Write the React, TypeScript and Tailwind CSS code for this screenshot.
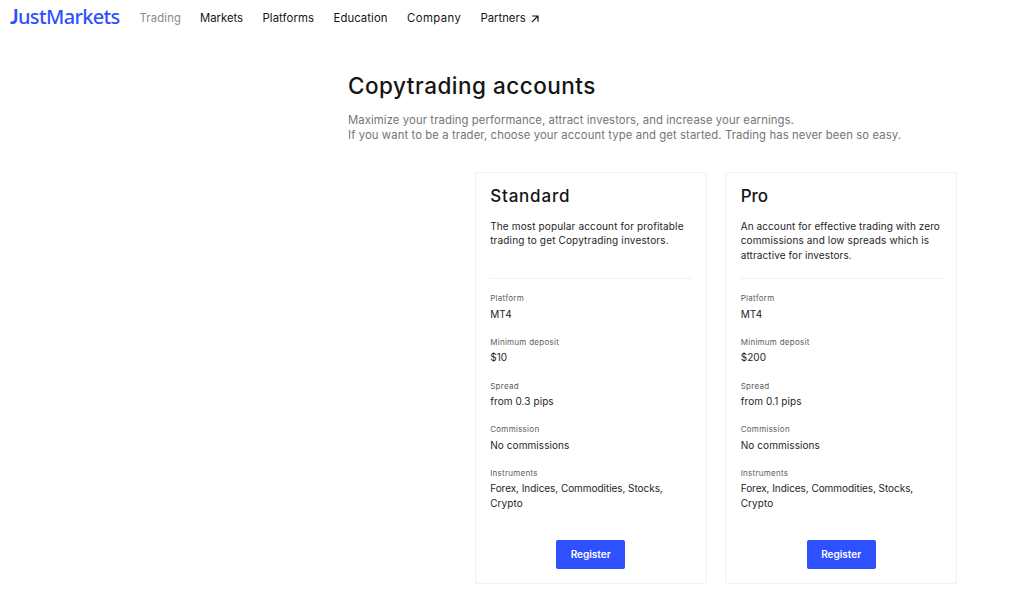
const navItems = [
  { label: 'Markets', className: 'w-[62.5px]' },
  { label: 'Platforms', className: 'w-[71px] tracking-[0.1px]' },
  { label: 'Education', className: 'w-[73.5px] tracking-[0.1px]' },
  { label: 'Company', className: 'w-[73.5px] tracking-[0.45px]' },
]

const accounts = [
  {
    name: 'Standard',
    titleClass: 'tracking-[0.8px]',
    description: [
      { text: 'The most popular account for profitable', className: 'tracking-[0.14px]' },
      { text: 'trading to get Copytrading investors.', className: 'tracking-[0.15px]' },
    ],
    deposit: '$10',
    spread: 'from 0.3 pips',
  },
  {
    name: 'Pro',
    titleClass: 'tracking-normal',
    description: [
      { text: 'An account for effective trading with zero', className: 'tracking-[0.08px]' },
      { text: 'commissions and low spreads which is', className: 'tracking-[0.13px]' },
      { text: 'attractive for investors.', className: 'tracking-[0.1px]' },
    ],
    deposit: '$200',
    spread: 'from 0.1 pips',
  },
]

function Header() {
  return (
    <header className="flex h-9 items-center whitespace-nowrap pl-[10px] pt-px text-[11.3px] text-[#151515]">
      <a className="mt-[-4px] w-[129.5px] font-['Noto_Sans'] text-[20px] font-medium leading-none tracking-[-0.65px] text-[#2f50ff]">
        <span className="font-['Lato'] font-bold">J</span>ustMarkets
      </a>
      <a className="w-[60.5px] tracking-[0.15px] text-[#8a8a8a]">Trading</a>
      {navItems.map((item) => (
        <a key={item.label} className={item.className}>
          {item.label}
        </a>
      ))}
      <a className="flex items-center">
        <span className="w-[50px]">Partners</span>
        <svg className="mt-px h-2 w-2" viewBox="0 0 8 8" fill="none" stroke="currentColor" strokeWidth="1.2">
          <path d="M1.2 1H7V6.8M7 1L.8 7.2" />
        </svg>
      </a>
    </header>
  )
}

function Detail({ label, lines }: { label: string; lines: string[] }) {
  return (
    <div className="mb-[12.6px] whitespace-nowrap">
      <dt className="h-[16.5px] text-[8px] leading-4 tracking-[0.27px] text-[#5c5c5c]">{label}</dt>
      {lines.map((line) => (
        <dd
          key={line}
          className={
            line.length > 20
              ? 'h-[15px] text-[10px] leading-[15px] tracking-[-0.05px] text-[#1e1e1e]'
              : 'h-[14.5px] text-[10px] leading-[15px] tracking-[0.08px] text-[#1e1e1e]'
          }
        >
          {line}
        </dd>
      ))}
    </div>
  )
}

function AccountCard({ account }: { account: (typeof accounts)[number] }) {
  return (
    <section className="flex h-[412px] w-[232px] flex-col rounded-[2px] border border-[#f1f1f1] px-[14.5px] pb-[14px]">
      <h2 className={`mt-[10px] h-[26px] text-[17px] font-medium leading-[26px] text-[#151515] ${account.titleClass}`}>
        {account.name}
      </h2>
      <div className="mt-[9.8px] h-[59.2px] whitespace-nowrap text-[10px] leading-[14.4px] text-[#1e1e1e]">
        {account.description.map((line) => (
          <p key={line.text} className={line.className}>
            {line.text}
          </p>
        ))}
      </div>
      <div className="mr-[-1px] h-px w-[202px] bg-[#f0f0f0]" />
      <dl className="mt-[11.4px]">
        <Detail label="Platform" lines={['MT4']} />
        <Detail label="Minimum deposit" lines={[account.deposit]} />
        <Detail label="Spread" lines={[account.spread]} />
        <Detail label="Commission" lines={['No commissions']} />
        <Detail label="Instruments" lines={['Forex, Indices, Commodities, Stocks,', 'Crypto']} />
      </dl>
      <button className="mt-auto h-[29.5px] w-[69px] self-center rounded-[2px] bg-[#2f50ff] text-[10px] font-semibold text-white">
        Register
      </button>
    </section>
  )
}

export default function App() {
  return (
    <div className="h-[604px] w-[1024px] overflow-hidden bg-white font-['Inter',sans-serif]">
      <Header />
      <main className="pl-[348px]">
        <h1 className="mt-[34px] h-8 whitespace-nowrap text-[22.5px] font-medium leading-8 tracking-[0.5px] text-[#151515]">
          Copytrading accounts
        </h1>
        <div className="mt-[11.4px] whitespace-nowrap text-[11.3px] leading-[14.4px] tracking-[0.1px] text-[#757575]">
          <p>Maximize your trading performance, attract investors, and increase your earnings.</p>
          <p>If you want to be a trader, choose your account type and get started. Trading has never been so easy.</p>
        </div>
        <div className="ml-[126.7px] mt-[29.8px] flex gap-[18.5px]">
          {accounts.map((account) => (
            <AccountCard key={account.name} account={account} />
          ))}
        </div>
      </main>
    </div>
  )
}
